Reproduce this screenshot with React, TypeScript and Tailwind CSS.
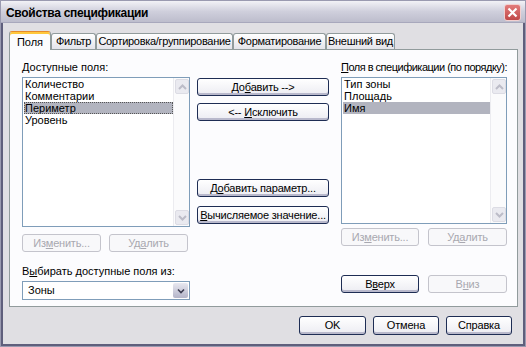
import React from "react";

const font = "font-['Liberation_Sans',Arial,sans-serif]";

function U({ children }: { children: React.ReactNode }) {
  return <span className="underline underline-offset-[1px]">{children}</span>;
}

function XpButton({
  children,
  disabled,
  className = "",
}: {
  children: React.ReactNode;
  disabled?: boolean;
  className?: string;
}) {
  return (
    <button
      type="button"
      className={`flex h-[18px] items-center justify-center rounded-[3px] border text-[11px] leading-none ${
        disabled
          ? "border-[#c4c4cc] bg-[#f8f8fa] text-[#a8a8b0]"
          : "border-[#1e2d54] bg-linear-to-b from-white to-[#ececf2] text-black shadow-[inset_0_-2px_0_#b9b9cc]"
      } ${className}`}
    >
      <span className="whitespace-nowrap tracking-[-0.2px]">{children}</span>
    </button>
  );
}

function ScrollArrow({ up }: { up?: boolean }) {
  return (
    <div className="flex h-[15px] w-[14px] items-center justify-center rounded-[2px] border border-[#dcdce4] bg-[#eaeaf0]">
      <svg width="9" height="6" viewBox="0 0 9 6">
        <path
          d={up ? "M1 5 L4.5 1.5 L8 5" : "M1 1 L4.5 4.5 L8 1"}
          fill="none"
          stroke="#bcbcc8"
          strokeWidth="2"
        />
      </svg>
    </div>
  );
}

function ListBox({
  items,
  selected,
  height,
  focus,
}: {
  items: string[];
  selected: number;
  height: string;
  focus?: boolean;
}) {
  return (
    <div className={`flex ${height} border border-[#7f9db9] bg-white`}>
      <div className="flex-1 pl-[1px]">
        {items.map((it, i) => (
          <div
            key={it}
            className={`h-[12px] whitespace-nowrap pl-[1px] text-[11px] leading-[12px] ${
              i === selected ? "bg-[#b2b4bf]" : ""
            } ${i === selected && focus ? "outline-1 outline-dotted outline-[#555] -outline-offset-1" : ""}`}
          >
            {it}
          </div>
        ))}
      </div>
      <div className="flex w-[16px] flex-col justify-between border-l border-[#ececf0] bg-[#fbfbfc] px-[1px] py-[1px]">
        <ScrollArrow up />
        <ScrollArrow />
      </div>
    </div>
  );
}

function Tab({
  label,
  active,
  w,
}: {
  label: string;
  active?: boolean;
  w: string;
}) {
  return active ? (
    <div
      className={`${w} relative z-10 -mb-px flex h-[19px] items-start justify-center whitespace-nowrap rounded-t-[3px] border border-b-0 border-[#919b9c] border-t-[#e68b2c] bg-[#fcfcfe] pt-[2px] text-[11px] shadow-[inset_0_2px_0_#ffc83c]`}
    >
      {label}
    </div>
  ) : (
    <div
      className={`${w} flex h-[16px] items-center justify-center overflow-hidden whitespace-nowrap rounded-t-[3px] border border-b-0 border-[#919b9c] bg-linear-to-b from-white to-[#e4e4ea] text-[11px] tracking-[-0.3px]`}
    >
      {label}
    </div>
  );
}

export default function App() {
  return (
    <div className={`h-[347px] w-[526px] overflow-hidden ${font} text-black`}>
      <div className="flex h-full flex-col border border-[#9a9ab0] bg-[#e0dfe3]">
        {/* title bar */}
        <div className="flex h-[22px] items-center justify-between border-b border-[#a8a8bc] bg-linear-to-b from-[#f2f2f6] via-[#cfcfdc] to-[#bdbdcc] pl-[5px] pr-[4px]">
          <span className="whitespace-nowrap pt-[2px] text-[12px] font-bold tracking-[-0.3px]">
            Свойства спецификации
          </span>
          <div className="mt-[2px] flex h-[17px] w-[17px] items-center justify-center rounded-[3px] border border-[#f2d0d0] bg-linear-to-b from-[#e27b7b] to-[#c04848]">
            <svg width="11" height="11" viewBox="0 0 11 11">
              <path d="M1.5 1.5 L9.5 9.5 M9.5 1.5 L1.5 9.5" stroke="white" strokeWidth="2.2" />
            </svg>
          </div>
        </div>

        <div className="flex flex-1 flex-col border-x-2 border-b-2 border-[#5f5f7c] px-[6px] pt-[8px]">
          {/* tabs */}
          <div className="flex items-end">
            <Tab label="Поля" active w="w-[42px]" />
            <Tab label="Фильтр" w="w-[45px]" />
            <Tab label="Сортировка/группирование" w="w-[137px]" />
            <Tab label="Форматирование" w="w-[93px]" />
            <Tab label="Внешний вид" w="w-[69px]" />
          </div>

          {/* panel */}
          <div className="flex h-[258px] w-[509px] gap-[7px] border border-[#919b9c] bg-[#fcfcfe] pl-[12px] pt-[10px] text-[11px]">
            {/* left column */}
            <div className="flex w-[168px] flex-col">
              <div className="h-[14px] whitespace-nowrap leading-[14px]">
                <U>Д</U>оступные поля:
              </div>
              <div className="mt-[3px]">
                <ListBox
                  items={["Количество", "Комментарии", "Периметр", "Уровень"]}
                  selected={2}
                  focus
                  height="h-[150px]"
                />
              </div>
              <div className="mt-[7px] flex gap-[8px]">
                <XpButton disabled className="w-[79px]">
                  Из<U>м</U>енить...
                </XpButton>
                <XpButton disabled className="w-[79px]">
                  Уд<U>а</U>лить
                </XpButton>
              </div>
              <div className="mt-[12px] h-[14px] whitespace-nowrap leading-[14px]">
                В<U>ы</U>бирать доступные поля из:
              </div>
              <div className="mt-[3px] flex h-[19px] border border-[#7f9db9] bg-white">
                <div className="flex-1 pl-[5px] leading-[17px]">Зоны</div>
                <div className="m-[1px] flex w-[15px] items-center justify-center rounded-[2px] bg-linear-to-b from-[#e8e8f0] to-[#b4b4c8]">
                  <svg width="8" height="6" viewBox="0 0 8 6">
                    <path d="M1 1.5 L4 4.5 L7 1.5" fill="none" stroke="#3c3c50" strokeWidth="1.6" />
                  </svg>
                </div>
              </div>
            </div>

            {/* middle column */}
            <div className="flex w-[132px] flex-col pt-[18px]">
              <XpButton>
                До<U>б</U>авить --&gt;
              </XpButton>
              <XpButton className="mt-[7px]">
                &lt;-- <U>И</U>сключить
              </XpButton>
              <XpButton className="mt-[58px]">
                Д<U>о</U>бавить параметр...
              </XpButton>
              <XpButton className="mt-[9px]">
                <U>В</U>ычисляемое значение...
              </XpButton>
            </div>

            {/* right column */}
            <div className="ml-[5px] flex w-[166px] flex-col">
              <div className="h-[14px] whitespace-nowrap leading-[14px] tracking-[-0.5px]">
                <U>П</U>оля в спецификации (по порядку):
              </div>
              <div className="mt-[3px]">
                <ListBox
                  items={["Тип зоны", "Площадь", "Имя"]}
                  selected={2}
                  height="h-[147px]"
                />
              </div>
              <div className="mt-[4px] flex gap-[9px]">
                <XpButton disabled className="w-[78px]">
                  Из<U>м</U>енить...
                </XpButton>
                <XpButton disabled className="w-[79px]">
                  Уд<U>а</U>лить
                </XpButton>
              </div>
              <div className="mt-[29px] flex gap-[9px]">
                <XpButton className="w-[78px]">
                  В<U>в</U>ерх
                </XpButton>
                <XpButton disabled className="w-[79px]">
                  В<U>н</U>из
                </XpButton>
              </div>
            </div>
          </div>

          {/* dialog buttons */}
          <div className="mt-[9px] flex justify-end gap-[7px] pr-[5px]">
            <XpButton className="h-[19px] w-[67px]">OK</XpButton>
            <XpButton className="h-[19px] w-[66px]">Отмена</XpButton>
            <XpButton className="h-[19px] w-[66px]">Справка</XpButton>
          </div>
        </div>
      </div>
    </div>
  );
}
